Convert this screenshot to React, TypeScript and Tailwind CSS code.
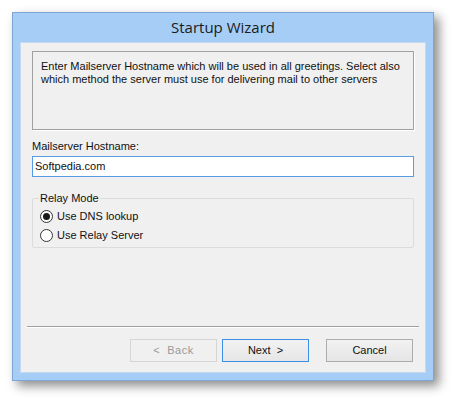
import React from 'react'

const sans = { fontFamily: '"Liberation Sans", Arial, sans-serif' }

const Radio: React.FC<{ checked?: boolean; label: string }> = ({ checked, label }) => (
  <label className="flex items-center h-[19px]">
    <span className="w-[13px] h-[13px] rounded-full border border-[#333] bg-white flex items-center justify-center">
      {checked && <span className="w-[7px] h-[7px] rounded-full bg-[#1a1a1a]" />}
    </span>
    <span className="ml-[4px] text-[11px] text-[#111]">{label}</span>
  </label>
)

export default function App() {
  return (
    <div className="w-[454px] h-[402px] bg-white pl-[12px] pt-[12px]" style={sans}>
      <div className="w-[422px] h-[369px] bg-[#a6cdf6] border border-[#7ea6d4] shadow-[5px_5px_10px_rgba(0,0,0,0.45)] flex flex-col px-[7px] pb-[7px]">
        <div className="h-[29px] flex items-center justify-center text-[15px] text-[#1b1b1b]" style={{ fontFamily: '"Open Sans", "Noto Sans", sans-serif' }}>
          Startup Wizard
        </div>
        <div className="flex-1 bg-[#f0f0f0] border border-[#c5daf0] flex flex-col px-[11px] pt-[8px]">
          <div className="h-[79px] border border-[#a0a0a0] shadow-[1px_1px_0_#ffffff] px-[8px] pt-[8px] text-[11px] leading-[13px] text-[#111]">
            Enter Mailserver Hostname which will be used in all greetings. Select also which method the server must use for delivering mail to other servers
          </div>
          <div className="mt-[10px] text-[11px] text-[#111] leading-[13px]">Mailserver Hostname:</div>
          <div className="mt-[3px] h-[21px] border border-[#569de5] bg-white flex items-center px-[2px] text-[11px] text-[#111]">
            Softpedia.com
          </div>
          <div className="relative mt-[21px] h-[50px] border border-[#dcdcdc] rounded-[2px] pl-[7px] pt-[8px]">
            <span className="absolute left-[6px] top-[-8px] bg-[#f0f0f0] px-[1px] text-[11px] leading-[14px] text-[#111]">Relay Mode</span>
            <Radio checked label="Use DNS lookup" />
            <Radio label="Use Relay Server" />
          </div>
          <div className="flex-1" />
          <div className="-mx-[5px] h-[2px] border-t border-[#a0a0a0] border-b border-b-white" />
          <div className="flex justify-end gap-[5px] mt-[11px] mb-[10px] mr-[1px]">
            <div className="w-[87px] h-[23px] border border-[#d5d5d5] bg-[#f0f0f0] flex items-center justify-center text-[11px] text-[#9a9a9a] tracking-[0.5px]">
              &lt;&nbsp;&nbsp;Back
            </div>
            <div className="w-[87px] h-[23px] border border-[#3c8ee6] bg-gradient-to-b from-[#f2f2f2] to-[#e6e6e6] flex items-center justify-center text-[11px] text-[#111]">
              Next&nbsp;&nbsp;&gt;
            </div>
            <div className="w-[87px] h-[23px] ml-[12px] border border-[#acacac] bg-gradient-to-b from-[#f2f2f2] to-[#e5e5e5] flex items-center justify-center text-[11px] text-[#111]">
              Cancel
            </div>
          </div>
        </div>
      </div>
    </div>
  )
}
